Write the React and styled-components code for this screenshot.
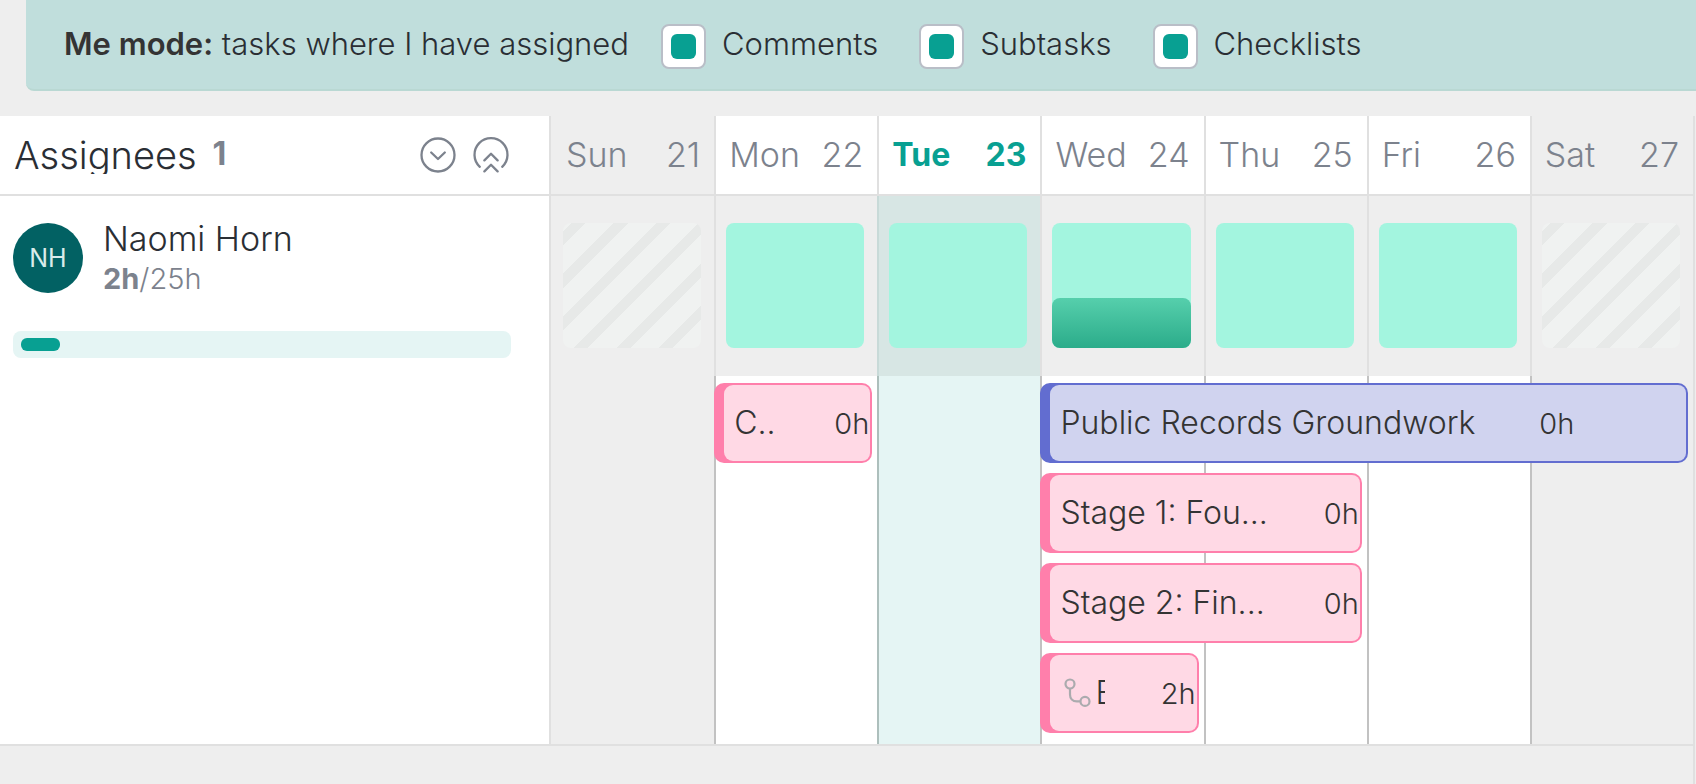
import React from "react";
import styled, { createGlobalStyle, ThemeProvider } from "styled-components";

const theme = {
  colors: {
    page: "#eeeeee",
    white: "#ffffff",
    line: "#e0e0e0",
    line_dark: "#c2c2c2",
    text: "#2a2e34",
    text_bar: "#343434",
    text_muted: "#7c828d",
    primary: "#08a092",
    primary_light: "#e5f5f4",
    today: "#d7e6e4",
    mint: "#a3f5df",
  },
};

const BAR_COLORS = {
  pink: { border: "#ff7fab", background: "#ffd9e5" },
  blue: { border: "#626dd0", background: "#d0d3ef" },
};

const GlobalStyle = createGlobalStyle`
  * {
    box-sizing: border-box;
  }
  body {
    margin: 0;
    background: #eeeeee;
    font-family: Inter, "Liberation Sans", sans-serif;
    font-weight: 300;
  }
`;

const Page = styled.div`
  min-height: 100vh;
  display: flex;
  flex-direction: column;
  color: ${(props) => props.theme.colors.text};
  background: ${(props) => props.theme.colors.page};
`;

const Banner = styled.div`
  display: flex;
  align-items: flex-start;
  height: 91px;
  margin-left: 26px;
  padding: 24px 0 0 38px;
  font-size: 31px;
  line-height: 40px;
  white-space: nowrap;
  background: #c0dedc;
  border-bottom: 2px solid #b9d8d3;
  border-radius: 0 0 0 8px;
`;
const BannerText = styled.p`
  margin: 0 32px 0 0;

  strong {
    font-weight: 600;
    color: ${(props) => props.theme.colors.text_bar};
  }
`;
const BannerOption = styled.label`
  display: flex;
  align-items: flex-start;
  gap: 16px;
  margin-right: 41px;
`;
const Checkbox = styled.input`
  appearance: none;
  display: grid;
  place-content: center;
  width: 45px;
  height: 45px;
  margin: 0;
  background: ${(props) => props.theme.colors.white};
  border: 2px solid #b9bec7;
  border-radius: 8px;

  &:checked::before {
    content: "";
    width: 25px;
    height: 25px;
    background: ${(props) => props.theme.colors.primary};
    border-radius: 6px;
  }
`;

const Schedule = styled.div`
  display: grid;
  grid-template-columns: 551px 1fr;
  flex: 1;
  grid-template-rows: auto auto 1fr;
  margin: 25px 1px 0 0;
  border-right: 2px solid ${(props) => props.theme.colors.line};
`;

const SidebarHeader = styled.div`
  display: flex;
  align-items: center;
  height: 80px;
  padding: 0 40px 0 14px;
  background: ${(props) => props.theme.colors.white};
  border-right: 2px solid ${(props) => props.theme.colors.line};
  border-bottom: 2px solid ${(props) => props.theme.colors.line};
`;
const SidebarTitle = styled.h1`
  margin: 0;
  overflow: hidden;
  font-size: 38px;
  font-weight: 300;
  line-height: 38px;
`;
const SidebarCount = styled.span`
  flex: 1;
  margin-left: 16px;
  font-size: 32px;
  font-weight: 700;
  line-height: 36px;
  padding-bottom: 2px;
  color: ${(props) => props.theme.colors.text_muted};
`;
const IconButton = styled.button`
  display: flex;
  padding: 0;
  color: ${(props) => props.theme.colors.text_muted};
  background: none;
  border: none;

  & + & {
    margin-left: 17px;
  }
`;

const Days = styled.div`
  display: grid;
  grid-template-columns: repeat(7, minmax(0, 1fr));
  border-bottom: 2px solid ${(props) => props.theme.colors.line};
`;
const Day = styled.div`
  display: flex;
  align-items: center;
  justify-content: space-between;
  padding: 0 14px 2px 13px;
  font-size: 34px;
  color: ${(props) => props.theme.colors.text_muted};
  background: ${(props) =>
    props.$off ? props.theme.colors.page : props.theme.colors.white};
  border-left: 2px solid ${(props) => props.theme.colors.line};

  &:first-child {
    border-left-color: transparent;
  }

  ${(props) =>
    props.$today &&
    `
font-weight: 700;
font-size: 32px;
color: ${props.theme.colors.primary};
`}
`;

const Sidebar = styled.div`
  padding: 23px 38px 0 13px;
  background: ${(props) => props.theme.colors.white};
  border-right: 2px solid ${(props) => props.theme.colors.line};
  border-bottom: 2px solid ${(props) => props.theme.colors.line};
`;
const Assignee = styled.div`
  display: flex;
  align-items: flex-start;
  gap: 20px;
`;
const Avatar = styled.div`
  display: flex;
  align-items: center;
  justify-content: center;
  width: 70px;
  height: 70px;
  margin: 4px 0 6px;
  font-size: 25px;
  font-weight: 400;
  color: #d9ebea;
  background: #026163;
  border-radius: 50%;
`;
const AssigneeName = styled.div`
  font-size: 34px;
  line-height: 40px;
`;
const AssigneeHours = styled.div`
  font-size: 29px;
  line-height: 40px;
  color: ${(props) => props.theme.colors.text_muted};

  strong {
    font-weight: 700;
  }
`;
const Progress = styled.div`
  height: 27px;
  margin-top: 32px;
  padding: 7px 8px;
  background: ${(props) => props.theme.colors.primary_light};
  border-radius: 8px;
`;
const ProgressFill = styled.div`
  height: 13px;
  background: ${(props) => props.theme.colors.primary};
  border-radius: 6px;
`;

const Timeline = styled.div`
  display: grid;
  grid-template-columns: repeat(7, minmax(0, 1fr));
  grid-template-rows: 180px repeat(4, 90px) 8px;
  border-bottom: 2px solid ${(props) => props.theme.colors.line};
`;
const CapacityCell = styled.div`
  grid-row: 1;
  grid-column: ${(props) => props.$column};
  padding: 27px 13px 28px 10px;
  background: ${(props) =>
    props.$today ? props.theme.colors.today : props.theme.colors.page};
  border-left: 2px solid ${(props) => (props.$today ? "#c8dad8" : props.theme.colors.line)};

  &:first-child {
    border-left-color: transparent;
  }
`;
const Capacity = styled.div`
  display: flex;
  align-items: flex-end;
  height: 100%;
  border-radius: 8px;
  background: ${(props) =>
    props.$off
      ? "repeating-linear-gradient(-45deg, #f0f2f1 0 20px, #e7e9e8 20px 30px)"
      : props.theme.colors.mint};
`;
const CapacityFill = styled.div`
  width: 100%;
  background: linear-gradient(#56cfac, #2bac8a);
  border-radius: 8px;
`;
const DayColumn = styled.div`
  grid-row: 2 / -1;
  grid-column: ${(props) => props.$column};
  background: ${(props) => {
    if (props.$today) return props.theme.colors.primary_light;
    return props.$off ? props.theme.colors.page : props.theme.colors.white;
  }};
  border-left: 2px solid
    ${(props) => {
      if (props.$column === 1) return "transparent";
      return props.$today ? "#adbfbc" : props.theme.colors.line_dark;
    }};
`;

const Bar = styled.div`
  grid-row: ${(props) => props.$row + 1};
  grid-column: ${(props) => props.$start} / span ${(props) => props.$span};
  display: flex;
  margin: 7px 5px 3px 0;
  padding-left: 10px;
  color: ${(props) => props.theme.colors.text_bar};
  background: ${(props) => BAR_COLORS[props.$color].border};
  border-radius: 10px;
`;
const BarBody = styled.div`
  flex: 1;
  display: flex;
  align-items: center;
  min-width: 0;
  margin: 2px 2px 2px 0;
  padding: 0 1px 0 10px;
  background: ${(props) => BAR_COLORS[props.$color].background};
  border-radius: 9px 8px 8px 9px;
`;
const BarTitle = styled.span`
  flex: ${(props) => (props.$fit ? "none" : "1 1 0")};
  min-width: 0;
  padding-right: ${(props) => (props.$fit ? "8px" : "0")};
  overflow: hidden;
  font-size: 32px;
  line-height: 40px;
  white-space: nowrap;
`;
const BarHours = styled.span`
  margin-left: 56px;
  padding-top: 2px;
  font-size: 29px;
  line-height: 40px;
`;
const SubtaskIcon = styled.svg`
  flex: none;
  margin: 0 4px 0 3px;
`;

const days = [
  { name: "Sun", date: 21, off: true },
  { name: "Mon", date: 22 },
  { name: "Tue", date: 23, today: true },
  { name: "Wed", date: 24, used: 40 },
  { name: "Thu", date: 25 },
  { name: "Fri", date: 26 },
  { name: "Sat", date: 27, off: true },
];

const tasks = [
  { id: 1, title: "C...", hours: 0, color: "pink", row: 1, start: 2, span: 1 },
  { id: 2, title: "Public Records Groundwork", hours: 0, color: "blue", row: 1, start: 4, span: 4, fit: true },
  { id: 3, title: "Stage 1: Fou...", hours: 0, color: "pink", row: 2, start: 4, span: 2 },
  { id: 4, title: "Stage 2: Fin...", hours: 0, color: "pink", row: 3, start: 4, span: 2 },
  { id: 5, title: "E", hours: 2, color: "pink", row: 4, start: 4, span: 1, subtask: true },
];

function ExpandIcon() {
  return (
    <svg width="36" height="36" viewBox="0 0 36 36" fill="none" stroke="currentColor" strokeWidth="2.3" strokeLinecap="round" strokeLinejoin="round">
      <circle cx="18" cy="18" r="16.5" />
      <path d="M11.2 15.5 18 22l6.8-6.5" />
    </svg>
  );
}

function CollapseIcon() {
  return (
    <svg width="36" height="36" viewBox="0 0 36 36" fill="none" stroke="currentColor" strokeWidth="2.3" strokeLinecap="round" strokeLinejoin="round">
      <path d="M6.8 29.8a16.5 16.5 0 1 1 22.4 0" />
      <path d="m11.4 23.4 6.6-6.6 6.6 6.6M11.4 34.4l6.6-6.6 6.6 6.6" />
    </svg>
  );
}

function Task({ task }) {
  return (
    <Bar $row={task.row} $start={task.start} $span={task.span} $color={task.color}>
      <BarBody $color={task.color}>
        {task.subtask && (
          <SubtaskIcon width="28" height="30" viewBox="0 0 28 30" fill="none" stroke="#ababae" strokeWidth="2.2">
            <circle cx="7" cy="6" r="4.5" />
            <circle cx="22" cy="23.4" r="4.5" />
            <path d="M7 10.5v6c0 4.2 2.6 6.9 6.8 6.9h3.7" />
          </SubtaskIcon>
        )}
        <BarTitle $fit={task.fit}>{task.title}</BarTitle>
        <BarHours>{task.hours}h</BarHours>
      </BarBody>
    </Bar>
  );
}

export default function App() {
  return (
    <ThemeProvider theme={theme}>
      <GlobalStyle />
      <Page>
        <Banner>
          <BannerText>
            <strong>Me mode:</strong> tasks where I have assigned
          </BannerText>
          {["Comments", "Subtasks", "Checklists"].map((option) => (
            <BannerOption key={option}>
              <Checkbox type="checkbox" defaultChecked />
              {option}
            </BannerOption>
          ))}
        </Banner>
        <Schedule>
          <SidebarHeader>
            <SidebarTitle>Assignees</SidebarTitle>
            <SidebarCount>1</SidebarCount>
            <IconButton type="button" aria-label="Expand all">
              <ExpandIcon />
            </IconButton>
            <IconButton type="button" aria-label="Collapse all">
              <CollapseIcon />
            </IconButton>
          </SidebarHeader>
          <Days>
            {days.map((day) => (
              <Day key={day.date} $off={day.off} $today={day.today}>
                <span>{day.name}</span>
                <span>{day.date}</span>
              </Day>
            ))}
          </Days>
          <Sidebar>
            <Assignee>
              <Avatar>NH</Avatar>
              <div>
                <AssigneeName>Naomi Horn</AssigneeName>
                <AssigneeHours>
                  <strong>2h</strong>/25h
                </AssigneeHours>
              </div>
            </Assignee>
            <Progress>
              <ProgressFill style={{ width: `${(2 / 25) * 100}%` }} />
            </Progress>
          </Sidebar>
          <Timeline>
            {days.map((day, i) => (
              <CapacityCell key={day.date} $column={i + 1} $today={day.today}>
                <Capacity $off={day.off}>
                  {day.used && <CapacityFill style={{ height: `${day.used}%` }} />}
                </Capacity>
              </CapacityCell>
            ))}
            {days.map((day, i) => (
              <DayColumn key={day.date} $column={i + 1} $off={day.off} $today={day.today} />
            ))}
            {tasks.map((task) => (
              <Task key={task.id} task={task} />
            ))}
          </Timeline>
        </Schedule>
      </Page>
    </ThemeProvider>
  );
}
